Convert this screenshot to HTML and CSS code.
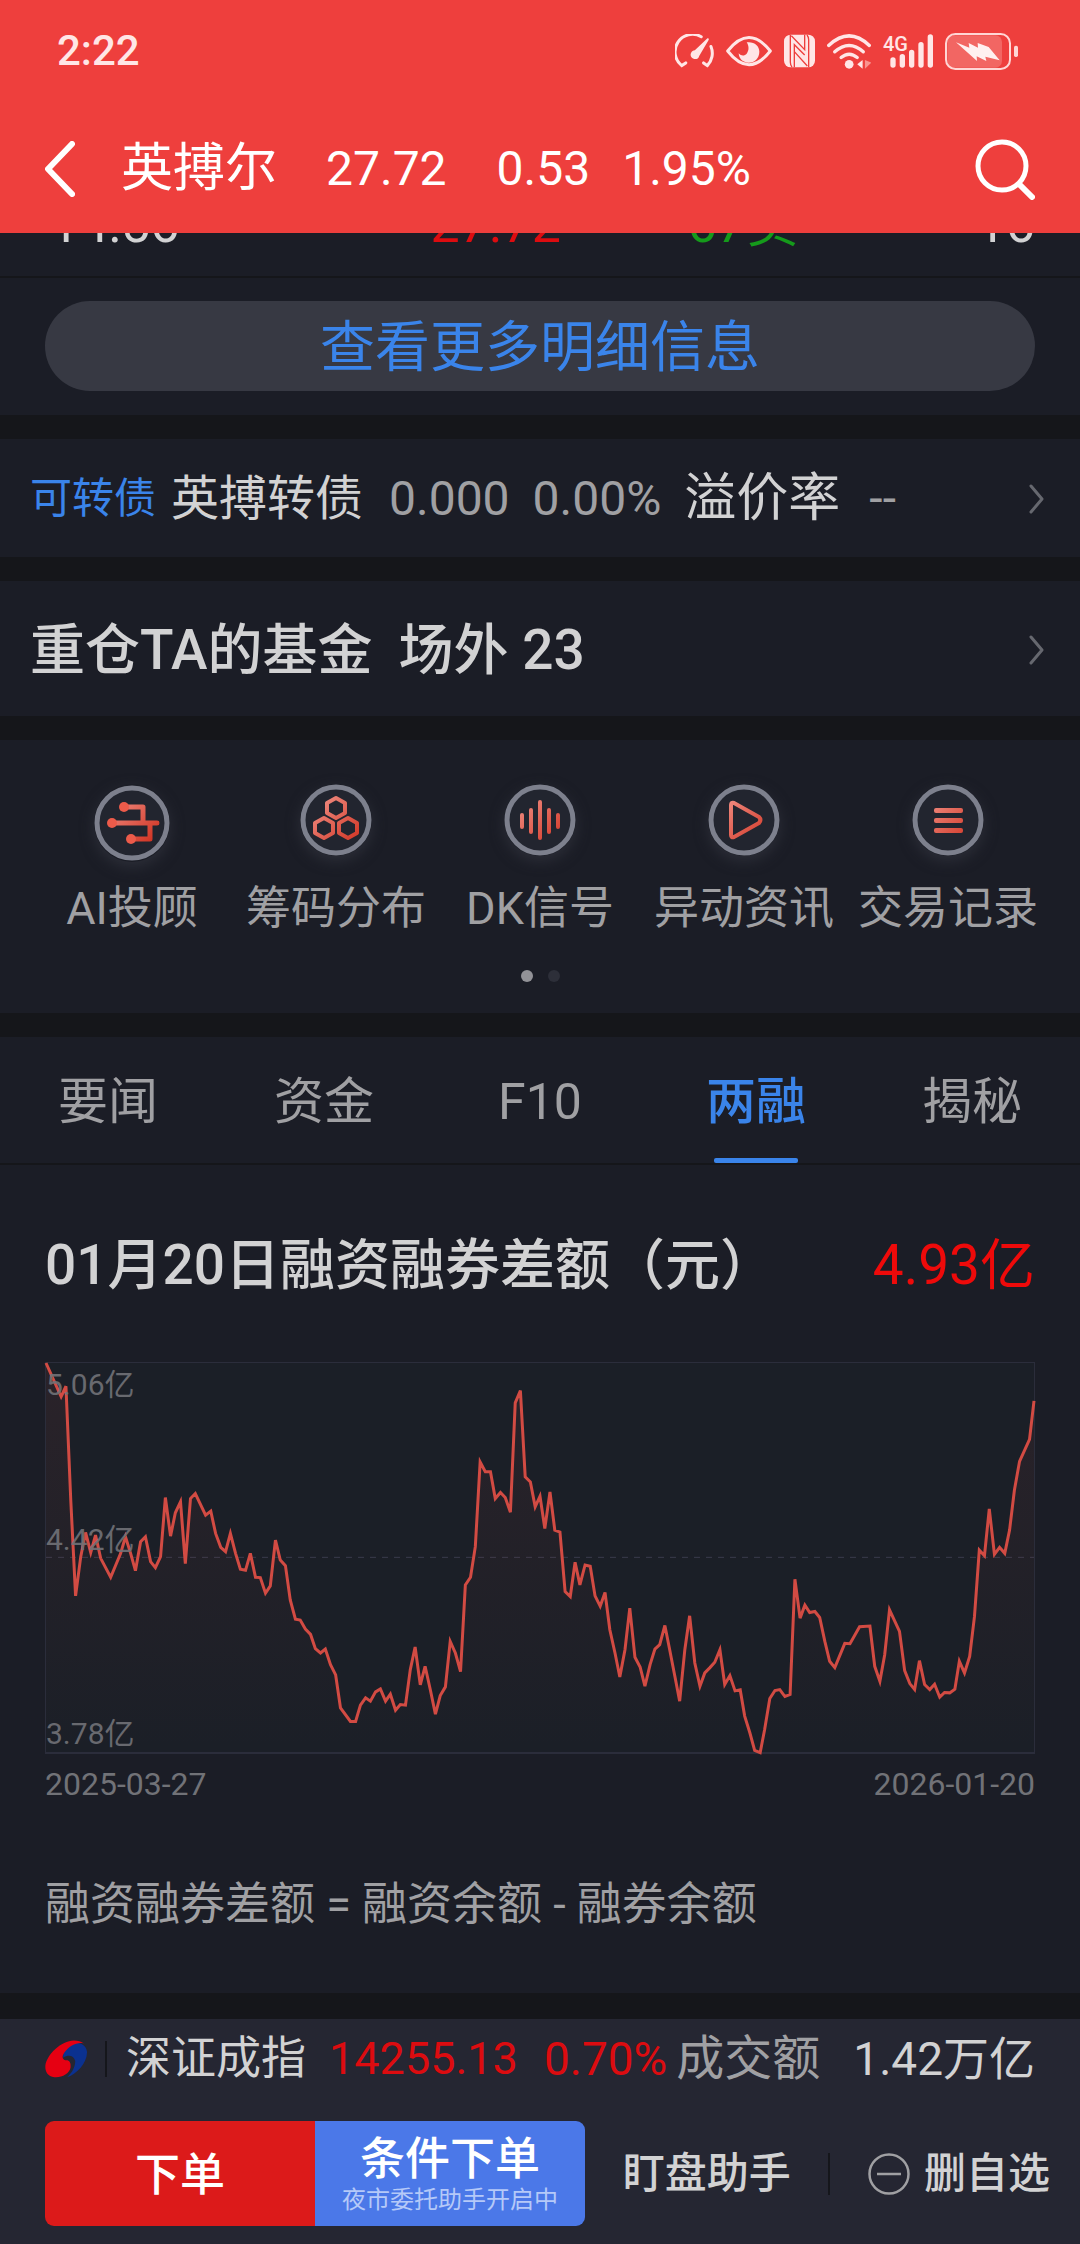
FILE: index.html
```html
<!DOCTYPE html>
<html lang="zh-CN">
<head>
<meta charset="utf-8">
<meta name="viewport" content="width=device-width, initial-scale=1">
<title>英搏尔 27.72</title>
<link rel="stylesheet" href="styles.css">
</head>
<body>
<div class="app">
  <header class="top">
    <div class="status">
      <time class="clock">2:22</time>
      <div class="status-icons" aria-hidden="true">
        <svg width="39" height="34" viewBox="46 40 116 101"><g fill="none" stroke="#ffe6e6" stroke-width="9" stroke-linecap="round"><path d="M124 48A52 52 0 0 0 66 134L78 126"/><path d="M153 77A53 53 0 0 1 142 134L131 126"/></g><path fill="#ffe6e6" d="M141 54c4-3 7 0 5 4l-28 47c-2 8-9 11-15 9-9-2-13-11-9-18 2-5 6-7 11-8z"/></svg>
        <svg width="46" height="32" viewBox="198 44 138 94"><path d="M203 91Q267 10 331 91Q267 173 203 91Z" fill="none" stroke="#ffe6e6" stroke-width="9" stroke-linejoin="round"/><path fill="#ffe6e6" d="M260 65c22-3 38 10 38 28 0 19-14 33-32 33-18 0-29-12-30-28 8 9 18 8 24 1 8-10 7-24 0-34z"/></svg>
        <svg width="31" height="34" viewBox="372 43 93 98"><rect x="372" y="43" width="93" height="98" rx="20" fill="#ffe6e6"/><g fill="none" stroke="#ee3f3d" stroke-width="4"><path d="M391 43V126q0 8 5 14"/><path d="M446 141V58q0-8-5-14"/><path d="M394 46L434 88V43M403 141V73L434 104M403 94L442 137"/></g></svg>
        <svg width="44" height="35" viewBox="501 39 131 104"><g fill="none" stroke="#ffe6e6" stroke-width="10" stroke-linecap="round"><path d="M506 73Q567 16 627 73"/><path d="M524 92Q567 54 609 92"/><path d="M543 109Q567 89 591 109"/></g><circle cx="567" cy="129" r="13" fill="#ffe6e6"/><path fill="#ffe6e6" d="M591 129l16-13v26z"/><path fill="#f9938f" d="M614 116l19 8-19 18z"/></svg>
        <svg class="signal" width="50" height="34" viewBox="669 41 150 100"><g stroke="#ffe6e6" stroke-width="16" stroke-linecap="round"><path d="M699 118v15M727 108v25M755 95v38M783 72v61M811 49v84"/></g><text x="669" y="90" class="net">4G</text></svg>
        <svg width="73" height="37" viewBox="855 36 219 111"><rect x="862" y="43" width="164" height="97" rx="20" fill="#f26663"/><rect x="858" y="39" width="192" height="105" rx="28" fill="none" stroke="#ffd6d5" stroke-width="6"/><rect x="1062" y="74" width="12" height="34" rx="5" fill="#ffd6d5"/><path fill="#fff0f0" d="M888 64l40 16-2-14 28 14-1-14 33 12 33 40-43-11 3 13-29-14 1 14z"/></svg>
      </div>
    </div>
    <div class="titlebar">
      <button class="icon-btn" aria-label="返回"><svg width="30" height="56" viewBox="0 0 30 56"><path d="M27 3L3 28L27 53" fill="none" stroke="#fff" stroke-width="6" stroke-linecap="round" stroke-linejoin="round"/></svg></button>
      <h1 class="name">英搏尔</h1>
      <span class="quote price">27.72</span>
      <span class="quote change">0.53</span>
      <span class="quote">1.95%</span>
      <button class="icon-btn search" aria-label="搜索"><svg width="60" height="62" viewBox="0 0 60 62"><circle cx="27" cy="28" r="24" fill="none" stroke="#fff" stroke-width="5"/><path d="M45 47L57 59" stroke="#fff" stroke-width="6" stroke-linecap="round"/></svg></button>
    </div>
  </header>

  <main>
    <section class="panel trades">
      <div class="trade-row">
        <span>14:56</span><span class="up">27.72</span><span class="down">67卖</span><span class="lot">16</span>
      </div>
      <div class="more-wrap"><button class="more">查看更多明细信息</button></div>
    </section>

    <a class="panel bond" href="#bond">
      <span class="tag">可转债</span>
      <span class="bond-name">英搏转债</span>
      <span class="muted num">0.000</span>
      <span class="muted num">0.00%</span>
      <span class="premium">溢价率</span>
      <span class="muted">--</span>
      <svg class="chev" width="15" height="30" viewBox="0 0 15 30"><path d="M2 2L13 15L2 28" fill="none" stroke="#66686f" stroke-width="3" stroke-linecap="round" stroke-linejoin="round"/></svg>
    </a>

    <a class="panel fund" href="#fund">
      <span>重仓TA的基金</span>
      <span>场外 23</span>
      <svg class="chev" width="15" height="30" viewBox="0 0 15 30"><path d="M2 2L13 15L2 28" fill="none" stroke="#66686f" stroke-width="3" stroke-linecap="round" stroke-linejoin="round"/></svg>
    </a>

    <section class="panel tools">
      <svg class="defs" width="0" height="0" aria-hidden="true"><defs>
        <linearGradient id="red" gradientUnits="userSpaceOnUse" x1="18" y1="18" x2="60" y2="60"><stop offset="0" stop-color="#ee8a7f"/><stop offset="1" stop-color="#d0301f"/></linearGradient>
      </defs></svg>
      <nav class="tool-grid">
        <a class="tool" href="#ai">
          <svg class="glow" width="76" height="78" viewBox="0 0 76 78"><circle cx="38" cy="39" r="35" fill="#22252f" stroke="#7d808d" stroke-width="5"/><g fill="none" stroke="url(#red)" stroke-width="5" stroke-linejoin="round" stroke-linecap="round"><path d="M31 23H49V38M18 39.1L63 39M38 55H56V40"/></g><g fill="#ec5b4a"><circle cx="30" cy="23" r="5"/><circle cx="18" cy="39" r="5"/><circle cx="37" cy="55" r="5"/></g></svg>
          <span>AI投顾</span>
        </a>
        <a class="tool" href="#chips">
          <svg class="glow" width="72" height="72" viewBox="0 0 72 72"><circle cx="36" cy="36" r="33" fill="#22252f" stroke="#7d808d" stroke-width="5"/><g fill="none" stroke="url(#red)" stroke-width="4" stroke-linejoin="round"><path d="M36 14l9 5v10l-9 5-9-5V19z"/><path d="M24 34l9 5v10l-9 5-9-5V39z"/><path d="M48 34l9 5v10l-9 5-9-5V39z"/></g></svg>
          <span>筹码分布</span>
        </a>
        <a class="tool" href="#dk">
          <svg class="glow" width="72" height="72" viewBox="0 0 72 72"><circle cx="36" cy="36" r="33" fill="#22252f" stroke="#7d808d" stroke-width="5"/><g fill="none" stroke="url(#red)" stroke-width="4" stroke-linecap="round"><path d="M18 31V43M27 26V48M36 18V54M45 26V48M54 31V43"/></g></svg>
          <span>DK信号</span>
        </a>
        <a class="tool" href="#news">
          <svg class="glow" width="72" height="72" viewBox="0 0 72 72"><circle cx="36" cy="36" r="33" fill="#22252f" stroke="#7d808d" stroke-width="5"/><path d="M23 21Q23 18 26 19L51 33Q54 36 51 39L26 53Q23 54 23 51Z" fill="none" stroke="url(#red)" stroke-width="4" stroke-linejoin="round"/></svg>
          <span>异动资讯</span>
        </a>
        <a class="tool" href="#records">
          <svg class="glow" width="72" height="72" viewBox="0 0 72 72"><circle cx="36" cy="36" r="33" fill="#22252f" stroke="#7d808d" stroke-width="5"/><g fill="url(#red)"><rect x="22" y="24" width="29" height="5" rx="2"/><rect x="22" y="34" width="29" height="5" rx="2"/><rect x="22" y="44" width="29" height="5" rx="2"/></g></svg>
          <span>交易记录</span>
        </a>
      </nav>
      <div class="dots" aria-hidden="true"><i class="dot on"></i><i class="dot"></i></div>
    </section>

    <section class="panel margin">
      <nav class="tabs">
        <a href="#a">要闻</a><a href="#b">资金</a><a href="#c">F10</a><a href="#d" class="active" aria-current="page">两融</a><a href="#e">揭秘</a>
      </nav>
      <div class="margin-head">
        <h2>01月20日融资融券差额（元）</h2>
        <strong>4.93亿</strong>
      </div>
      <div class="chart">
        <svg class="plot" viewBox="132 67 2872 1171" preserveAspectRatio="none" role="img" aria-label="融资融券差额走势">
          <defs><linearGradient id="area" x1="0" y1="0" x2="0" y2="1"><stop offset="0" stop-color="#d94b43" stop-opacity=".08"/><stop offset="1" stop-color="#d94b43" stop-opacity="0"/></linearGradient></defs>
          <path class="mid" d="M132 652H3004"/>
          <path id="fill" fill="url(#area)" d=""/>
          <polyline id="line" class="line" points="132,67 176,168 190,137 204,480 218,768 233,650 247,577 262,638 276,585 291,655 320,712 349,640 363,590 378,640 392,692 407,605 421,590 436,665 450,683 465,650 479,472 494,588 508,518 523,485 537,671 552,475 566,460 596,525 611,513 625,580 640,622 654,635 668,580 683,640 697,688 712,691 726,640 741,712 755,713 770,760 784,738 799,600 813,660 828,677 842,780 857,838 871,841 886,868 901,884 915,927 930,940 944,928 959,975 974,1006 988,1105 1017,1146 1032,1146 1046,1097 1061,1075 1075,1085 1090,1057 1104,1048 1119,1085 1133,1064 1148,1112 1162,1095 1177,1097 1191,990 1205,922 1220,1036 1234,980 1249,1050 1264,1124 1278,1068 1293,1042 1307,905 1322,940 1337,996 1351,735 1366,712 1380,620 1394,365 1409,394 1424,394 1438,475 1453,457 1467,472 1482,516 1496,187 1511,150 1525,410 1540,425 1554,500 1568,468 1582,565 1597,455 1611,570 1626,576 1641,755 1656,770 1670,667 1684,735 1699,675 1714,679 1728,768 1743,799 1757,758 1771,870 1786,940 1800,1012 1815,930 1829,805 1844,953 1859,982 1873,1040 1888,975 1902,928 1916,915 1931,857 1945,930 1960,1010 1974,1085 1989,930 2003,828 2018,970 2033,1040 2047,1000 2062,984 2076,968 2091,930 2105,1035 2120,1008 2135,1054 2150,1051 2163,1130 2178,1180 2192,1233 2208,1240 2221,1170 2236,1077 2251,1053 2265,1050 2280,1071 2295,1065 2309,718 2324,835 2338,796 2352,818 2367,815 2381,833 2396,905 2410,965 2425,984 2454,911 2469,912 2497,861 2527,859 2541,980 2556,1025 2570,945 2584,810 2613,875 2628,993 2643,1032 2657,1050 2671,963 2686,1035 2701,1050 2715,1034 2730,1073 2744,1059 2759,1060 2774,1049 2787,965 2802,1000 2817,950 2831,830 2845,630 2860,647 2874,506 2889,643 2904,622 2919,640 2933,570 2947,450 2962,363 2991,297 3004,181"/>
        </svg>
        <span class="level high">5.06亿</span>
        <span class="level middle">4.42亿</span>
        <span class="level low">3.78亿</span>
      </div>
      <div class="dates"><time>2025-03-27</time><time>2026-01-20</time></div>
      <p class="formula">融资融券差额 = 融资余额 - 融券余额</p>
    </section>
  </main>

  <footer class="bottom">
    <div class="index">
      <svg class="logo" width="42" height="38" viewBox="0 0 125 112"><path fill="#0b318f" d="M72 10C92 4 122 8 125 34C126 66 96 100 66 110C84 94 90 76 90 62C86 46 70 42 54 52C54 34 62 16 72 10Z"/><path fill="#e60012" d="M116 10C96 4 72 18 60 34C50 46 50 56 60 60C72 58 78 66 76 82C72 100 50 112 28 110C8 108 0 94 1 76C6 42 48 2 86 1C98 1 108 4 116 10Z"/></svg>
      <i class="rule"></i>
      <span class="index-name">深证成指</span>
      <span class="up index-val">14255.13</span>
      <span class="up index-pct">0.70%</span>
      <span class="muted turnover">成交额</span>
      <span class="amount">1.42万亿</span>
    </div>
    <div class="actions">
      <div class="orders">
        <button class="order buy">下单</button>
        <button class="order cond">条件下单<small>夜市委托助手开启中</small></button>
      </div>
      <button class="plain watch">盯盘助手</button>
      <i class="rule tall"></i>
      <button class="plain remove"><svg width="42" height="42" viewBox="0 0 42 42"><circle cx="21" cy="21" r="19.5" fill="none" stroke="#a0a0a3" stroke-width="2.5"/><path d="M9 21H33" stroke="#a0a0a3" stroke-width="2.5"/></svg>删自选</button>
    </div>
  </footer>
</div>
<script src="chart.js"></script>
</body>
</html>
```
FILE: chart.js
```js
// Close the series along the baseline to shade the area below it.
const series = document.getElementById('line').getAttribute('points');
document.getElementById('fill').setAttribute('d', 'M' + series + ' 3004,1238 132,1238Z');
```
FILE: styles.css
```css
* { box-sizing: border-box; }
body {
  margin: 0;
  background: #15161a;
  color: #d2d2d3;
  font-family: Roboto, "Noto Sans CJK SC", sans-serif;
  font-size: 48px;
  line-height: 60px;
}
a { color: inherit; text-decoration: none; }
button {
  margin: 0;
  padding: 0;
  border: 0;
  background: none;
  color: inherit;
  font: inherit;
}
svg { display: block; }
h1, h2, p { margin: 0; font-weight: 400; }
.app { display: flex; flex-direction: column; min-height: 100vh; }
main { display: flex; flex-direction: column; gap: 24px; flex: 1; }
.panel { background: #1b1d26; }
.muted { color: #a0a0a3; }
.up { color: #dc0c10; }
.down { color: #159a1b; }
.chev { margin-left: auto; }

/* header */
.top { position: sticky; top: 0; z-index: 2; background: #ee3f3d; color: #fff; }
.status {
  display: flex;
  align-items: center;
  justify-content: space-between;
  height: 102px;
  padding: 0 62px 0 57px;
}
.clock { font-size: 42px; font-weight: 500; color: #ffe6e6; }
.status-icons { display: flex; align-items: center; gap: 12px; }
.signal { overflow: visible; }
.net { font-size: 60px; font-weight: 500; line-height: 1; fill: #ffe6e6; }
.titlebar {
  display: flex;
  align-items: center;
  height: 131px;
  padding: 2px 45px 0;
}
.name { margin: 0 49px 0 46px; font-size: 52px; }
.price { margin-right: 50px; }
.change { margin-right: 32px; }
.search { margin-left: auto; }

/* trade details: the list is scrolled part-way under the header */
.trades { margin-top: -38px; }
.trade-row {
  display: grid;
  grid-template-columns: 274px repeat(3, 1fr);
  padding: 0 45px 21px 50px;
  border-bottom: 2px solid #15161a;
  font-size: 52px;
}
.trade-row span { height: 60px; text-align: right; }
.trade-row span:first-child { text-align: left; }
.more-wrap { padding: 23px 45px 24px; }
.more {
  display: block;
  width: 100%;
  height: 90px;
  padding-top: 2px;
  border-radius: 45px;
  background: #373943;
  color: #3a84ea;
  font-size: 55px;
}

/* link rows */
.bond, .fund {
  display: flex;
  align-items: center;
  padding: 2px 36px 0 30px;
}
.bond { height: 118px; }
.tag { margin-right: 15px; color: #3a84ea; font-size: 42px; }
.bond-name { margin-right: 26px; }
.num { margin-right: 23px; }
.premium { margin-right: 29px; font-size: 52px; }
.fund { gap: 26px; height: 135px; font-size: 55px; font-weight: 500; }

/* tools */
.tools { padding: 44px 30px 31px; }
.defs { position: absolute; }
.tool-grid { display: grid; grid-template-columns: repeat(5, 1fr); }
.tool {
  display: flex;
  flex-direction: column;
  align-items: center;
  justify-content: space-between;
  height: 155px;
  color: #a0a0a3;
  font-size: 45px;
  white-space: nowrap;
}
.glow { overflow: visible; border-radius: 50%; box-shadow: 0 5px 14px #2c2e38; }
.dots { display: flex; justify-content: center; gap: 15px; margin-top: 31px; }
.dot { width: 12px; height: 12px; border-radius: 50%; background: #2d2f39; }
.dot.on { background: #929297; }

/* margin trading */
.tabs {
  display: grid;
  grid-template-columns: repeat(5, 1fr);
  height: 128px;
  border-bottom: 2px solid #15161a;
  color: #a0a0a3;
  font-size: 50px;
  line-height: 130px;
  text-align: center;
}
.tabs a { display: flex; flex-direction: column; align-items: center; height: 126px; }
.tabs .active { color: #3a84ea; font-weight: 500; }
.active::after {
  content: "";
  width: 84px;
  height: 5px;
  margin-top: -9px;
  border-radius: 2px;
  background: #3a84ea;
}
.margin-head {
  display: flex;
  justify-content: space-between;
  padding: 70px 45px 67px;
  font-size: 55px;
}
.margin-head h2 { font-size: 55px; font-weight: 500; }
.margin-head strong { color: #ee0a0a; font-weight: 400; }
.chart {
  position: relative;
  height: 392px;
  margin: 0 45px;
  border: 1px solid #2b2d3b;
  border-bottom-width: 2px;
  background: #1b1f27;
}
.plot { width: 100%; height: 100%; overflow: visible; }
.line { fill: none; stroke: #d24b43; stroke-width: 3; vector-effect: non-scaling-stroke; }
.mid { stroke: #3a3c4c; stroke-dasharray: 6 6; vector-effect: non-scaling-stroke; }
.level, .dates { color: #717277; font-size: 30px; line-height: 36px; }
.level { position: absolute; left: 0; opacity: 0.9; }
.high { top: 4px; }
.middle { bottom: 50%; }
.low { bottom: 0; }
.dates {
  display: flex;
  justify-content: space-between;
  padding: 12px 45px 0;
  font-size: 32px;
}
.formula { padding: 73px 45px 58px; color: #a0a0a3; font-size: 45px; }

/* bottom bar */
.bottom {
  position: sticky;
  bottom: 0;
  margin-top: 26px;
  padding: 10px 0 18px;
  background: #252632;
}
.index { display: flex; align-items: center; padding: 0 45px; font-size: 46px; white-space: nowrap; }
.rule { width: 2px; height: 36px; margin: 0 19px 0 18px; background: #15161b; }
.index-name { font-size: 45px; }
.index-val { margin-left: 23px; font-size: 45px; }
.index-pct { margin-left: 26px; }
.turnover { margin-left: 9px; font-size: 48px; }
.amount { margin-left: auto; }
.actions {
  display: flex;
  align-items: center;
  justify-content: space-between;
  margin-top: 32px;
  padding: 0 30px 0 45px;
}
.orders { display: flex; width: 540px; height: 105px; border-radius: 9px; overflow: hidden; }
.order { flex: 1; padding-top: 4px; color: #fff; font-size: 45px; font-weight: 500; line-height: 48px; }
.buy { background: #dc1a1a; }
.cond { background: #4b78e8; }
.order small {
  display: block;
  color: #b5c9f8;
  font-size: 24px;
  font-weight: 400;
  line-height: 32px;
}
.plain { display: flex; align-items: center; gap: 14px; font-size: 42px; font-weight: 500; white-space: nowrap; }
.tall { height: 42px; margin: 0; }
```
